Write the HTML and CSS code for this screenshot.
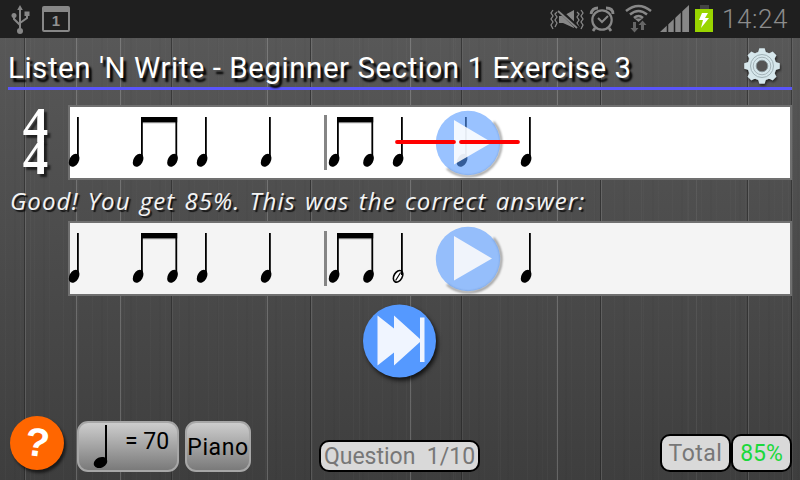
FILE: index.html
```
<!DOCTYPE html>
<html lang="en">
<head>
<meta charset="utf-8">
<title>Listen 'N Write</title>
<link rel="stylesheet" href="styles.css">
</head>
<body>
<svg class="defs" aria-hidden="true">
  <defs>
    <filter id="soft" x="-20%" y="-20%" width="140%" height="140%"><feGaussianBlur stdDeviation=".8"/></filter>
    <g id="head"><ellipse cx="5.1" cy="55.3" rx="4.7" ry="7" transform="rotate(30 5.1 55.3)"/></g>
    <g id="quarter"><use href="#head"/><rect x="8" y="12" width="1.8" height="42"/></g>
    <g id="pair">
      <use href="#quarter"/><use href="#quarter" x="34.4"/>
      <rect x="8" y="12" width="36.2" height="5.4"/><rect x="9" y="17.4" width="35" height="1" opacity=".25"/>
    </g>
    <g id="half">
      <ellipse cx="5.1" cy="55.3" rx="4.100" ry="6.300" transform="rotate(30 5.1 55.3)" fill="#fff" stroke="#000" stroke-width="1.600"/>
      <path d="M2.600 59.500 7.600 51.500" stroke="#000" stroke-width="1.200"/>
      <rect x="8" y="12" width="1.8" height="42"/>
    </g>
    <g id="disc">
      <path d="M58.500 12A33 33 0 0 1 12 58.500" fill="none" stroke="#000" stroke-opacity=".4" stroke-width="2.200" filter="url(#soft)"/>
      <circle cx="33" cy="33" r="32.200" fill="#5599ff" opacity=".6"/>
    </g>
  </defs>
</svg>

<div class="status">
  <svg class="usb" width="20" height="32" viewBox="0 0 20 32" fill="#878787" stroke="#878787">
    <path d="M10 6v20M4 12v4l6 6M17 10v5l-7 5" fill="none" stroke-width="2"/>
    <path d="M10 2l2.8 5H7.2z" stroke="none"/><circle cx="4" cy="12.5" r="2.5" stroke="none"/><rect x="14.5" y="8.500" width="5" height="4.500" stroke="none"/><circle cx="10" cy="28" r="3" stroke="none"/>
  </svg>
  <div class="calendar">1</div>
  <div class="spacer"></div>
  <svg class="icons" width="171" height="38" viewBox="0 0 171 38" fill="none" stroke="#878787">
    <path d="M2 10l-2 3 2 3-2 3 2 3-2 3 2 4M6 12l-2 2 2 3-2 3 2 3-2 4M26 12l2 2-2 3 2 3-2 3 2 4M30 10l2 3-2 3 2 3-2 3 2 3-2 4" stroke-width="1.300"/>
    <path d="M8 16h4l11-6v18l-11-5H8z" fill="#878787" stroke="none"/><path d="M8 10l19 18" stroke="#1f1f1f" stroke-width="4"/><path d="M7 11l19 17" stroke-width="1.800"/>
    <circle cx="51" cy="20" r="9.700" stroke-width="2.200"/><path d="M47 18l4 4 6-6" stroke-width="2"/><path d="M40 14q1-6 7-6M55 8q7 0 7 6M44 28l-2 3M58 28l2 3" stroke-width="2.800"/>
    <path d="M75 11q12.500-10 25 0M79 14.500q8.500-7 17 0M83 18q4.500-4 9 0" stroke-width="2.500"/><path d="M83.500 18.500h8L87.500 22z" fill="#878787" stroke="none"/>
    <g fill="#666" stroke="none"><path d="M82 22h3v6h2.500L83.500 32.500l-4-4.500H82zM90 30h3v-5h2.500L91.500 20.500l-4 4.500H90z"/></g>
    <path d="M109 32l29-27v27z" fill="#878787" stroke="none"/><path d="M116.500 23v10M123.500 16v17M130.500 10v23" stroke="#1f1f1f" stroke-width="1.500"/>
    <rect x="149" y="5" width="9" height="4" fill="#444" stroke="none"/><rect x="144" y="9" width="18" height="23" fill="#99d500" stroke="none"/><path d="M151 13h6l-3 5h4l-8 10 2-8h-4z" fill="#fff" stroke="none"/>
  </svg>
  <span class="clock">14:24</span>
</div>

<header class="header">
  <h1>Listen 'N Write - Beginner Section 1 Exercise 3</h1>
  <svg class="gear" width="40" height="40" viewBox="-20 -20 40 40">
    <g fill="#d6e7ec">
      <circle r="14.500"/>
      <g id="teeth"><path d="M-4.200-13l1.500-4.800h5.400L4.200-13v26l-1.500 4.800h-5.400L-4.200 13z"/><path d="M-4.200-13l1.500-4.800h5.400L4.200-13v26l-1.500 4.800h-5.400L-4.200 13z" transform="rotate(90)"/></g>
      <use href="#teeth" transform="rotate(45)"/>
    </g>
    <circle r="11.500" fill="none" stroke="#9fb1b6" stroke-width="1"/><circle r="8.800" fill="none" stroke="#a5b4b9" stroke-width="1"/>
    <circle r="5.800" fill="#555" stroke="#889599" stroke-width="1"/>
  </svg>
</header>

<main>
  <section class="row">
    <div class="meter"><span>4</span><span>4</span></div>
    <div class="staff">
      <div class="notes">
        <svg><use href="#quarter"/></svg><svg><use href="#pair"/></svg><svg><use href="#quarter"/></svg><svg><use href="#quarter"/></svg><i class="bar"></i><svg><use href="#pair"/></svg><svg><use href="#quarter"/></svg><svg><use href="#quarter"/></svg><svg><use href="#quarter"/></svg>
      </div>
      <svg class="play" viewBox="0 0 66 66"><use href="#disc"/><path d="M19 10v44.500L57 32.500z" fill="#fff" opacity=".88"/></svg>
      <svg class="strike" width="126" height="6"><path d="M3 3h57M67 3h57" stroke="#f00" stroke-width="3.800" stroke-linecap="round"/></svg>
    </div>
  </section>
  <p class="feedback">Good! You get 85%. This was the correct answer:</p>
  <section class="row">
    <div class="meter"></div>
    <div class="staff answer">
      <div class="notes">
        <svg><use href="#quarter"/></svg><svg><use href="#pair"/></svg><svg><use href="#quarter"/></svg><svg><use href="#quarter"/></svg><i class="bar"></i><svg><use href="#pair"/></svg><svg class="long"><use href="#half"/></svg><svg><use href="#quarter"/></svg>
      </div>
      <svg class="play" viewBox="0 0 66 66"><use href="#disc"/><path d="M19 10v44.500L57 32.500z" fill="#f0f4fb"/></svg>
    </div>
  </section>
  <div class="next">
    <svg width="74" height="74" viewBox="0 0 74 74"><circle cx="37" cy="37" r="36.500" fill="#5599ff"/><path d="M15 11.500l16.500 13V11.500L57.500 35V13.500h4.500v44.500H57.500V38L31.500 61.500V48.500L15 61.500z" fill="#f0f5ff"/></svg>
  </div>
</main>

<footer class="footer">
  <div class="help"><span>?</span></div>
  <div class="btn tempo"><svg width="16" height="46" viewBox="0 0 16 46"><ellipse cx="7.500" cy="38.500" rx="7" ry="5.200" transform="rotate(-25 7.500 38.500)"/><rect x="12" y="1" width="2" height="37"/></svg><span>= 70</span></div>
  <div class="btn piano">Piano</div>
  <div class="pill question">Question&nbsp; 1/10</div>
  <div class="pill total">Total</div>
  <div class="pill score">85%</div>
</footer>
</body>
</html>
```
FILE: styles.css
```
* { box-sizing: border-box; }
body {
  margin: 0; width: 800px; height: 480px; overflow: hidden;
  display: flex; flex-direction: column;
  font-family: Roboto, "Liberation Sans", sans-serif;
  background-color: #484848;
  background-image:
    linear-gradient(90deg,
      transparent 24px, #2228 24px 25px, #fff2 25px 26px, transparent 26px 76px,
      #fff3 76px 77px, transparent 77px 120px, #fff3 120px 121px, transparent 121px 171px,
      #2229 171px 172px, #fff1 172px 173px, transparent 173px 267px, #fff3 267px 268px, transparent 268px 310px,
      #2229 310px 311px, #fff2 311px 312px, transparent 312px 410px, #fff3 410px 411px, transparent 411px 461px,
      #2229 461px 462px, #fff1 462px 463px, transparent 463px 557px, #fff3 557px 558px, transparent 558px 600px,
      #2229 600px 601px, #fff2 601px 602px, transparent 602px 696px, #fff1 696px 697px, transparent 697px 747px,
      #2228 747px 748px, #fff2 748px 749px, transparent 749px 791px, #2228 791px 792px, #fff1 792px 793px, transparent 793px),
    repeating-linear-gradient(90deg, transparent 0 5px, #ffffff05 5px 6px, transparent 6px 14px, #00000007 14px 16px, transparent 16px 20px, #ffffff04 20px 21px, transparent 21px 29px),
    repeating-linear-gradient(90deg, transparent 0 30px, #ffffff07 30px 31px, transparent 31px 47px),
    linear-gradient(#5a5a5a, #3e3e3e);
}
.defs { position: absolute; width: 0; height: 0; }
.status { width: 800px; height: 38px; flex: none; background: #1f1f1f; display: flex; padding-left: 10px; }
.usb { margin-top: 3px; }
.calendar {
  width: 28px; height: 26px; margin: 6px 0 0 12px; border: 2px solid #878787; border-top-width: 6px; border-radius: 2px;
  color: #929292; font: bold 15px/18px "Liberation Sans", sans-serif; text-align: center;
}
.spacer { flex: 1; }
.icons { overflow: visible; }
.clock { width: 78px; color: #8c8c8c; font-size: 26px; font-weight: 300; line-height: 38px; letter-spacing: .6px; }
.header { height: 52px; flex: none; margin: 0 8px; border-bottom: 3px solid #5a55fa; display: flex; align-items: flex-start; justify-content: space-between; }
h1 { margin: 12px 0 0; color: #fff; font-size: 29.500px; font-weight: 400; line-height: 36px; letter-spacing: .53px; white-space: nowrap; text-shadow: 3px 4px 2px #000; }
.gear { margin: 8px 10px 0 0; filter: drop-shadow(1px 2px 1px #0008); }
main { padding-top: 15px; }
.row { display: flex; height: 75px; }
.meter { width: 68px; display: flex; flex-direction: column; align-items: center; padding-left: 3px; color: #fff; font: bold 51px/32px "Liberation Serif", serif; text-shadow: 3px 3px 2px #0009; }
.meter span { height: 32px; position: relative; top: 4px; }
.staff { position: relative; width: 724px; border: 2px solid #707070; background: #fff; }
.answer { background: #f4f4f4; }
.notes { display: flex; margin-left: -1px; height: 71px; }
.notes svg { width: 64px; height: 71px; margin-top: -2px; overflow: visible; flex: none; }
.notes .long { width: 128px; }
.bar { width: 4px; height: 55px; margin: 8px 1px 0 -1px; border-left: 3px solid #858585; }
.play { position: absolute; left: 365px; top: 2.500px; width: 66px; height: 66px; overflow: visible; }
.strike { position: absolute; left: 324px; top: 32px; }
.feedback {
  margin: 0; height: 41px; padding-left: 10px; color: #f4f4f4; white-space: nowrap;
  font: italic 24px/41px "Open Sans", sans-serif; letter-spacing: 1.05px; word-spacing: 2px; text-shadow: 2px 2px 1px #000b;
}
.next { width: 74px; height: 74px; margin: 8px auto 0; filter: drop-shadow(2px 3px 2px #000b); transform: translateX(-.5px); }
.footer { display: flex; align-items: flex-end; margin-top: auto; height: 64px; padding: 0 8px 8px 10px; }
.help { width: 54px; height: 54px; margin-bottom: 2px; border-radius: 50%; background: #f60; box-shadow: 2px 3px 3px #0009; display: flex; justify-content: center; align-items: center; color: #fff; font: bold 40px/54px "Liberation Sans", sans-serif; }
.help span { transform: rotate(8deg) translateY(-1px); }
.btn { height: 51px; border: 2px solid #a7a7a7; border-radius: 11px; background: linear-gradient(#cdcdcd, #7a7a7a); color: #000; font-size: 23px; white-space: nowrap; }
.tempo { width: 102px; margin-left: 13px; display: flex; padding: 0 0 0 14px; }
.tempo svg { margin-top: 1px; }
.tempo span { margin: 5px 0 0 16px; line-height: 28px; }
.piano { width: 66px; margin-left: 6px; text-align: center; line-height: 49px; letter-spacing: .6px; }
.pill { border: 2.500px solid #000; border-radius: 10px; background: #d9d9d9; color: #777; font-size: 23px; text-align: center; white-space: nowrap; }
.question { width: 161px; height: 32px; line-height: 30px; margin-left: 68px; }
.total { width: 71px; height: 38px; line-height: 36px; margin-left: auto; letter-spacing: .5px; }
.score { width: 61px; height: 38px; line-height: 36px; color: #1bd83b; }
```
